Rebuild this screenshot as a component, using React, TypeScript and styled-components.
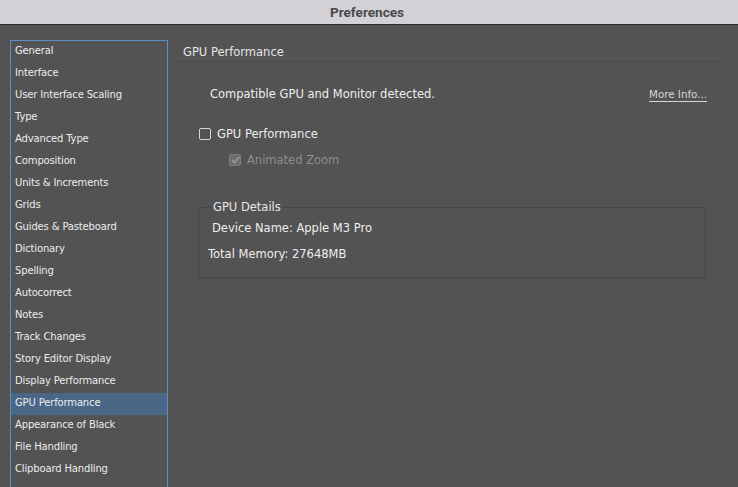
import React from "react";
import styled, { createGlobalStyle } from "styled-components";

const Global = createGlobalStyle`
  html, body { margin: 0; padding: 0; background: #535353; }
  body { font-family: "DejaVu Sans", "Liberation Sans", sans-serif; overflow: hidden; }
  #root { width: 738px; height: 487px; }
`;

const Window = styled.div`
  width: 738px;
  height: 487px;
  display: flex;
  flex-direction: column;
  background: #535353;
  overflow: hidden;
`;

const TitleBar = styled.div`
  height: 24px;
  flex: none;
  background: #d3d1d5;
  border-bottom: 1px solid #2b2b2b;
  display: flex;
  align-items: center;
  justify-content: center;
  font-family: "Roboto", "Liberation Sans", sans-serif;
  font-weight: 700;
  font-size: 13.6px;
  color: #4a4a4c;
  padding-right: 4px;
`;

const Body = styled.div`
  flex: 1;
  display: flex;
  padding: 15px 0 0 10px;
  min-height: 0;
`;

const Sidebar = styled.ul`
  list-style: none;
  margin: 0;
  padding: 0;
  width: 156px;
  height: 480px;
  flex: none;
  border: 1px solid #5b8fc5;
  box-sizing: content-box;
`;

const Item = styled.li<{ $selected?: boolean }>`
  height: 22px;
  line-height: 19px;
  padding-left: 4px;
  font-size: 10px;
  letter-spacing: -0.15px;
  color: #ececec;
  background: ${(p) => (p.$selected ? "#4a6787" : "transparent")};
  white-space: nowrap;
`;

const Content = styled.div`
  flex: 1;
  padding: 4px 18px 0 7px;
  display: flex;
  flex-direction: column;
  font-size: 11.5px;
`;

const SectionHeader = styled.div`
  color: #e6e6e6;
  padding: 0 0 1px 8px;
  line-height: 16px;
  border-bottom: 1px solid #4a4a4a;
`;

const InfoRow = styled.div`
  display: flex;
  justify-content: space-between;
  align-items: center;
  margin-top: 24px;
  padding: 0 13px 0 35px;
  line-height: 16px;
`;

const InfoText = styled.span`
  color: #eeeeee;
`;

const MoreLink = styled.a`
  font-size: 10.3px;
  color: #d6d6d6;
  text-decoration: underline;
  text-underline-offset: 3px;
`;

const CheckRow = styled.label<{ $indent: number; $disabled?: boolean }>`
  display: flex;
  align-items: center;
  gap: 6px;
  margin-top: ${(p) => (p.$disabled ? "6px" : "22px")};
  padding-left: ${(p) => p.$indent}px;
  color: ${(p) => (p.$disabled ? "#8e8e8e" : "#eeeeee")};
  height: 20px;
`;

const Box = styled.span<{ $disabled?: boolean }>`
  width: 10px;
  height: 10px;
  border: 1px solid ${(p) => (p.$disabled ? "#7a7a7a" : "#d8d8d8")};
  border-radius: 2px;
  background: ${(p) => (p.$disabled ? "#6d6d6d" : "transparent")};
  display: flex;
  align-items: center;
  justify-content: center;
`;

const Group = styled.fieldset`
  margin: 30px 14px 0 23px;
  padding: 0 0 13px 13px;
  border: 1px solid #454545;
  border-radius: 2px;
  min-width: 0;
`;

const Legend = styled.legend`
  color: #e6e6e6;
  padding: 0 2px;
  margin-left: -1px;
`;

const DetailRow = styled.div<{ $shift?: number }>`
  color: #eeeeee;
  line-height: 20px;
  margin-top: 4px;
  margin-left: ${(p) => p.$shift ?? 0}px;
  & + & { margin-top: 6px; }
`;

const items = [
  "General",
  "Interface",
  "User Interface Scaling",
  "Type",
  "Advanced Type",
  "Composition",
  "Units & Increments",
  "Grids",
  "Guides & Pasteboard",
  "Dictionary",
  "Spelling",
  "Autocorrect",
  "Notes",
  "Track Changes",
  "Story Editor Display",
  "Display Performance",
  "GPU Performance",
  "Appearance of Black",
  "File Handling",
  "Clipboard Handling",
];

export default function App() {
  return (
    <Window>
      <Global />
      <TitleBar>Preferences</TitleBar>
      <Body>
        <Sidebar>
          {items.map((it) => (
            <Item key={it} $selected={it === "GPU Performance"}>
              {it}
            </Item>
          ))}
        </Sidebar>
        <Content>
          <SectionHeader>GPU Performance</SectionHeader>
          <InfoRow>
            <InfoText>Compatible GPU and Monitor detected.</InfoText>
            <MoreLink>More Info...</MoreLink>
          </InfoRow>
          <CheckRow $indent={24}>
            <Box />
            GPU Performance
          </CheckRow>
          <CheckRow $indent={54} $disabled>
            <Box $disabled>
              <svg width="9" height="8" viewBox="0 0 9 8">
                <path d="M1 4.2 L3.4 6.5 L8 1.2" fill="none" stroke="#9a9a9a" strokeWidth="1.6" />
              </svg>
            </Box>
            Animated Zoom
          </CheckRow>
          <Group>
            <Legend>GPU Details</Legend>
            <DetailRow>Device Name: Apple M3 Pro</DetailRow>
            <DetailRow $shift={-4}>Total Memory: 27648MB</DetailRow>
          </Group>
        </Content>
      </Body>
    </Window>
  );
}
